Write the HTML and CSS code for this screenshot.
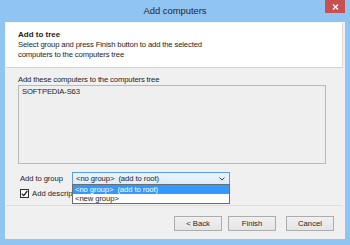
FILE: index.html
```html
<!DOCTYPE html>
<html lang="en">
<head>
    <meta charset="UTF-8">
    <title>Add computers</title>
    <link rel="stylesheet" href="styles.css">
</head>
<body>
<div class="window">
    <div class="titlebar">
        <span></span>
        <span class="title">Add computers</span>
        <button class="close" title="Close">
            <svg width="7" height="6" viewBox="0 0 7 6"><path d="M1 0.5 L6 5.5 M6 0.5 L1 5.5" stroke="#fff" stroke-width="1.4"/></svg>
        </button>
    </div>
    <div class="client">
        <div class="header">
            <div class="header-title">Add to tree</div>
            <div class="header-desc">Select group and press Finish button to add the selected<br>computers to the computers tree</div>
        </div>
        <div class="body">
            <div class="caption">Add these computers to the computers tree</div>
            <div class="listbox">SOFTPEDIA-S63</div>
            <div class="group-row">
                <label class="group-label">Add to group</label>
                <div class="combo">
                    <span class="combo-text">&lt;no group&gt;&nbsp; (add to root)</span>
                    <svg class="chevron" width="6" height="4" viewBox="0 0 6 4"><path d="M0.5 0.5 L3 3 L5.5 0.5" fill="none" stroke="#404040" stroke-width="1"/></svg>
                    <ul class="dropdown">
                        <li class="selected">&lt;no group&gt;&nbsp; (add to root)</li>
                        <li>&lt;new group&gt;</li>
                    </ul>
                </div>
            </div>
            <div class="check-row">
                <span class="checkbox">
                    <svg width="7" height="7" viewBox="0 0 7 7"><path d="M0.8 3.6 L2.7 5.6 L6.3 1" fill="none" stroke="#222" stroke-width="1.3"/></svg>
                </span>
                <span class="check-label">Add description</span>
            </div>
        </div>
        <div class="footer">
            <button class="btn">&lt; Back</button>
            <button class="btn">Finish</button>
            <button class="btn btn-cancel">Cancel</button>
        </div>
    </div>
</div>
</body>
</html>
```

FILE: styles.css
```css
:root {
    --frame: #90c4f2; --client: #f0f0f0; --text: #1e1e1e;
    --btn-border: #acacac; --highlight: #3399ff;
}
body { margin: 0; font-family: "Liberation Sans", Arial, sans-serif; font-size: 7.7px; color: var(--text); }
.window { width: 350px; height: 245px; box-sizing: border-box; padding: 0 5px 6px 5px; background: var(--frame); display: flex; flex-direction: column; }
.titlebar { height: 22px; flex: none; display: grid; grid-template-columns: 1fr auto 1fr; align-items: start; }
.title { font-size: 9.4px; line-height: 11px; padding-top: 5px; color: #262626; }
.close { justify-self: end; width: 20px; height: 13px; padding: 0; border: none; background: #c75050; display: flex; align-items: center; justify-content: center; }
.client { flex: 1; display: flex; flex-direction: column; background: var(--client); border-top: 1px solid #f6f6f6; border-left: 1px solid #f6f6f6; padding-right: 2px; }
.header { background: #fff; border-right: 1px solid #dadada; border-bottom: 1px solid #d2d2d2; padding: 6px 12px 7px 12px; }
.header-title { font-weight: 700; font-size: 8px; line-height: 11px; }
.header-desc { line-height: 10px; letter-spacing: -0.15px; }
.body { flex: 1; padding: 6px 17px 0 12px; }
.caption { line-height: 11px; letter-spacing: -0.15px; }
.listbox { height: 79px; box-sizing: border-box; border: 1px solid #b9b9b9; background: #efefef; padding: 0 3px; line-height: 11px; letter-spacing: -0.15px; }
.group-row { display: flex; align-items: center; margin-top: 8px; height: 13px; }
.group-label { width: 52px; margin-left: 2px; letter-spacing: -0.1px; }
.combo { position: relative; width: 158px; height: 13px; box-sizing: border-box; border: 1px solid #5a9ee6; background: linear-gradient(#ecf4fc, #dcecfc); display: flex; align-items: center; justify-content: space-between; padding: 0 3px 0 3px; }
.combo-text { letter-spacing: -0.1px; }
.chevron { margin-right: 1px; }
.dropdown { position: absolute; left: -1px; top: 11px; width: 158px; box-sizing: border-box; margin: 0; padding: 0; list-style: none; background: #fff; border: 1px solid #6d6d6d; z-index: 10; }
.dropdown li { height: 9px; line-height: 9px; padding: 0 2px; letter-spacing: -0.1px; }
.dropdown .selected { background: var(--highlight); color: #fff; }
.check-row { display: flex; align-items: center; gap: 3px; margin-top: 4px; margin-left: 2px; height: 9px; }
.checkbox { width: 9px; height: 9px; box-sizing: border-box; border: 1px solid #333; background: #fff; display: flex; align-items: center; justify-content: center; }
/* the open dropdown hides the rest of this label */
.check-label { width: 40px; overflow: hidden; white-space: nowrap; }
.footer { flex: none; display: flex; justify-content: flex-end; gap: 6px; border-top: 1px solid #dcdcdc; padding: 10px 9px 8px 0; }
.btn { width: 48px; height: 15px; padding: 0; border: 1px solid var(--btn-border); background: linear-gradient(#f0f0f0, #e5e5e5); font-family: inherit; font-size: 7.7px; color: var(--text); }
.btn-cancel { margin-left: 4px; }
```
